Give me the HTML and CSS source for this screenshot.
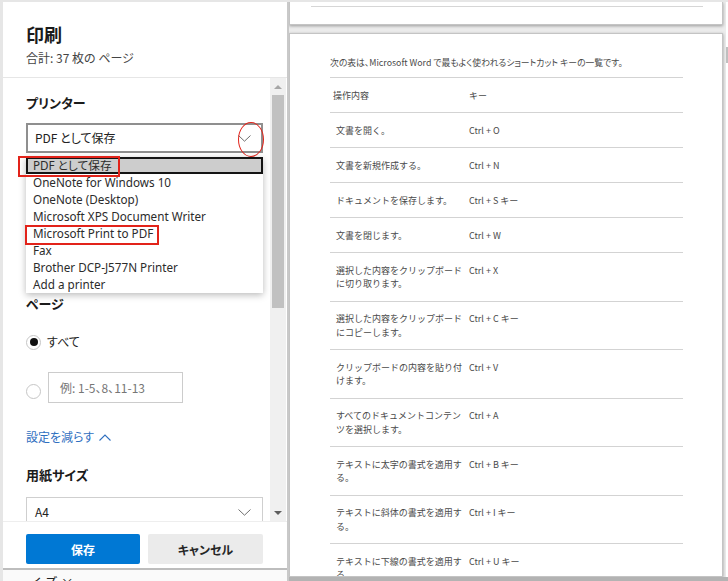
FILE: index.html
```html
<!DOCTYPE html>
<html lang="ja">
<head>
<meta charset="utf-8">
<title>印刷</title>
<link rel="stylesheet" href="styles.css">
</head>
<body>
<div class="app">
  <aside class="side">
    <div class="dialog">
      <header class="dlg-head">
        <h1 class="title">印刷</h1>
        <p class="subtitle">合計: 37 枚の ページ</p>
      </header>
      <div class="dlg-body">
        <div class="scroll-content">
          <section class="group printer">
            <h2 class="label">プリンター</h2>
            <div class="select-wrap">
              <div class="select select-open">
                <span class="select-text">PDF として保存</span>
                <svg class="chev" width="13" height="7" viewBox="0 0 13 7"><path d="M0.5 0.5 L6.5 6.2 L12.5 0.5" fill="none" stroke="#6e6e6e" stroke-width="1"/></svg>
                <span class="mark-ellipse"></span>
              </div>
              <ul class="dropdown">
                <li class="opt opt-active">PDF として保存<span class="mark-rect mark-a"></span></li>
                <li class="opt">OneNote for Windows 10</li>
                <li class="opt">OneNote (Desktop)</li>
                <li class="opt">Microsoft XPS Document Writer</li>
                <li class="opt">Microsoft Print to PDF<span class="mark-rect mark-b"></span></li>
                <li class="opt">Fax</li>
                <li class="opt">Brother DCP-J577N Printer</li>
                <li class="opt">Add a printer</li>
              </ul>
            </div>
          </section>
          <section class="group pages-grp">
            <h2 class="label">ページ</h2>
            <div class="radio-row">
              <span class="radio checked"></span>
              <span class="radio-label">すべて</span>
            </div>
            <div class="radio-row range">
              <span class="radio"></span>
              <span class="text-input">例: 1-5、8、11-13</span>
            </div>
          </section>
          <div class="more-link"><span>設定を減らす</span><svg class="chev-up" width="12" height="7" viewBox="0 0 12 7"><path d="M0.5 6.5 L6 1 L11.5 6.5" fill="none" stroke="#2f6fbf" stroke-width="1.1"/></svg></div>
          <section class="group paper">
            <h2 class="label">用紙サイズ</h2>
            <div class="select select-light">
              <span class="select-text">A4</span>
              <svg class="chev" width="13" height="7" viewBox="0 0 13 7"><path d="M0.5 0.5 L6.5 6.2 L12.5 0.5" fill="none" stroke="#6e6e6e" stroke-width="1"/></svg>
            </div>
          </section>
        </div>
        <div class="scrollbar">
          <div class="sb-btn"><span class="tri tri-up"></span></div>
          <div class="sb-track"><div class="sb-thumb"></div></div>
          <div class="sb-btn"><span class="tri tri-down"></span></div>
        </div>
      </div>
      <footer class="dlg-foot">
        <button class="btn btn-primary">保存</button>
        <button class="btn btn-secondary">キャンセル</button>
      </footer>
    </div>
    <div class="behind">ー イ ズ ×</div>
  </aside>
  <main class="preview">
    <div class="pages">
      <div class="page page-prev"><div class="rule"></div></div>
      <div class="page page-cur">
        <p class="intro">次の表は、Microsoft Word で最もよく使われるショートカット キーの一覧です。</p>
        <table class="keys">
          <tr class="head"><td>操作内容</td><td>キー</td></tr>
          <tr><td>文書を開く。</td><td>Ctrl + O</td></tr>
          <tr><td>文書を新規作成する。</td><td>Ctrl + N</td></tr>
          <tr><td>ドキュメントを保存します。</td><td>Ctrl + S キー</td></tr>
          <tr><td>文書を閉じます。</td><td>Ctrl + W</td></tr>
          <tr><td>選択した内容をクリップボード<br>に切り取ります。</td><td>Ctrl + X</td></tr>
          <tr><td>選択した内容をクリップボード<br>にコピーします。</td><td>Ctrl + C キー</td></tr>
          <tr><td>クリップボードの内容を貼り付<br>けます。</td><td>Ctrl + V</td></tr>
          <tr><td>すべてのドキュメントコンテン<br>ツを選択します。</td><td>Ctrl + A</td></tr>
          <tr><td>テキストに太字の書式を適用す<br>る。</td><td>Ctrl + B キー</td></tr>
          <tr><td>テキストに斜体の書式を適用す<br>る。</td><td>Ctrl + I キー</td></tr>
          <tr><td>テキストに下線の書式を適用す<br>る。</td><td>Ctrl + U キー</td></tr>
        </table>
      </div>
    </div>
    <div class="vscroll"><div class="vthumb"></div></div>
  </main>
</div>
</body>
</html>
```
FILE: styles.css
```css
* { box-sizing: border-box; margin: 0; padding: 0; }
html, body { width: 728px; height: 581px; overflow: hidden; }
body {
  background: #e4e4e4;
  font-family: "Noto Sans CJK JP", "Noto Sans", sans-serif;
  color: #1e1e1e;
}
.app {
  display: flex;
  align-items: flex-start;
  height: 581px;
  padding: 2px 0 0 3px;
  background: #e6e6e6;
}

/* ---------- left: print dialog ---------- */
.side {
  width: 286px;
  height: 579px;
  flex: none;
  display: flex;
  flex-direction: column;
  border-right: 2px solid #c9c9c9;
  overflow: hidden;
}
.dialog {
  height: 568px;
  flex: none;
  background: #fff;
  display: flex;
  flex-direction: column;
  border-bottom: 2px solid #bdbdbd;
  font-feature-settings: "palt";
}
.dlg-head {
  height: 76px;
  flex: none;
  padding: 20px 23px 0;
  border-bottom: 1px solid #e6e6e6;
}
.title {
  height: 24px;
  font-size: 18px;
  line-height: 24px;
  font-weight: 600;
  color: #1a1a1a;
}
.subtitle {
  height: 16px;
  margin-top: 4px;
  font-size: 12px;
  line-height: 16px;
  color: #444;
}
.dlg-body {
  height: 443px;
  flex: none;
  display: flex;
}
.scroll-content {
  flex: 1;
  overflow: hidden;
  padding: 16px 7px 0 23px;
}
.label {
  height: 18px;
  font-size: 13px;
  line-height: 18px;
  font-weight: 600;
  color: #1b1b1b;
}
.select-wrap {
  position: relative;
  margin-top: 11px;
}
.select {
  position: relative;
  height: 30px;
  display: flex;
  align-items: center;
  justify-content: space-between;
  padding: 0 10px 0 7px;
  border: 2px solid #8f8f8f;
  background: #fff;
}
.select-text {
  font-size: 12px;
  line-height: 16px;
  color: #222;
}
.select-light {
  margin-top: 13px;
  border: 1px solid #cfcfcf;
  padding-left: 8px;
  padding-right: 11px;
}
.chev { display: block; }
.mark-ellipse {
  position: absolute;
  left: 210px;
  top: -3px;
  width: 26px;
  height: 35px;
  border: 1.5px solid #e2231a;
  border-radius: 50%;
}
.dropdown {
  position: absolute;
  top: 34px;
  left: 0;
  width: 237px;
  list-style: none;
  background: #fff;
  box-shadow: 0 2px 7px rgba(0, 0, 0, 0.28);
  z-index: 5;
}
.opt {
  position: relative;
  height: 17px;
  line-height: 17px;
  padding-left: 7px;
  font-family: "Noto Sans", "Noto Sans CJK JP", sans-serif;
  font-size: 11.7px;
  color: #2b2b2b;
  white-space: nowrap;
}
.opt-active {
  background: #cdcdcd;
  box-shadow: inset 0 0 0 2px #141414;
}
.mark-rect {
  position: absolute;
  border: 2px solid #e2231a;
}
.mark-a { left: -8px; top: -1px; width: 102px; height: 21px; }
.mark-b { left: -1px; top: 0; width: 134px; height: 20px; }

.pages-grp { margin-top: 142px; }
.radio-row {
  display: flex;
  align-items: center;
  height: 24px;
  margin-top: 17px;
}
.radio-row.range {
  height: 31px;
  margin-top: 18px;
}
.radio {
  width: 15px;
  height: 15px;
  flex: none;
  border-radius: 50%;
  border: 1.5px solid #c6c6c6;
  background: #fff;
  display: flex;
  align-items: center;
  justify-content: center;
}
.range .radio { margin-top: 8px; }
.radio.checked::after {
  content: "";
  width: 8px;
  height: 8px;
  border-radius: 50%;
  background: #111;
}
.radio-label {
  margin-left: 6px;
  font-size: 12px;
  line-height: 16px;
  color: #222;
}
.text-input {
  margin-left: 7px;
  width: 135px;
  height: 31px;
  border: 1px solid #cccccc;
  padding-left: 11px;
  font-size: 12px;
  line-height: 29px;
  color: #767676;
}
.more-link {
  height: 18px;
  margin-top: 25px;
  display: flex;
  align-items: center;
  gap: 5px;
  font-size: 12px;
  line-height: 18px;
  color: #2f6fbf;
}
.paper { margin-top: 20px; }

.scrollbar {
  width: 16px;
  flex: none;
  margin-right: 1px;
  background: #f0f0f0;
  display: flex;
  flex-direction: column;
}
.sb-btn {
  height: 17px;
  flex: none;
  display: flex;
  align-items: center;
  justify-content: center;
}
.tri {
  width: 0;
  height: 0;
  border-left: 4px solid transparent;
  border-right: 4px solid transparent;
}
.tri-up { border-bottom: 4px solid #a6a6a6; }
.tri-down { border-top: 4px solid #5e5e5e; }
.sb-track { flex: 1; padding: 0 2px; }
.sb-thumb {
  height: 213px;
  background: #c1c1c1;
}

.dlg-foot {
  height: 47px;
  flex: none;
  display: flex;
  gap: 8px;
  padding: 12px 0 0 23px;
  border-top: 1px solid #eeeeee;
}
.btn {
  height: 30px;
  border: none;
  border-radius: 2px;
  font-family: inherit;
  font-size: 12px;
  font-weight: 700;
  font-feature-settings: "palt";
}
.btn-primary {
  width: 114px;
  background: #0078d4;
  color: #fff;
}
.btn-secondary {
  width: 115px;
  background: #ebebeb;
  color: #262626;
}
.behind {
  flex: 1;
  background: #fafafa;
  padding: 4px 0 0 10px;
  font-size: 13px;
  line-height: 16px;
  color: #222;
  white-space: nowrap;
  overflow: hidden;
}

/* ---------- right: preview ---------- */
.preview {
  flex: 1;
  height: 579px;
  display: flex;
  align-items: flex-start;
  background: #ececec;
  border-bottom: 4px solid #b3b3b3;
  overflow: hidden;
}
.pages {
  flex: 1;
}
.page {
  background: #fff;
  border: 1px solid #c4c4c4;
  box-shadow: 0 1px 3px rgba(0, 0, 0, 0.35);
}
.page-prev {
  height: 23px;
  border-top: none;
  padding: 4px 19px 0 21px;
}
.rule {
  height: 1px;
  background: #d6d6d6;
}
.page-cur {
  margin-top: 8px;
  height: 544px;
  padding: 22px 39px 0 40px;
  overflow: hidden;
  color: #4a4a4a;
}
.intro {
  height: 13px;
  font-size: 8.8px;
  line-height: 13px;
  font-feature-settings: "palt";
  white-space: nowrap;
  margin-bottom: 8px;
}
.keys {
  width: 100%;
  border-collapse: collapse;
  font-size: 9px;
  line-height: 13.5px;
}
.keys td {
  padding: 10.5px 0 10px;
  border-top: 1px solid #d3d3d3;
  vertical-align: top;
}
.keys td:first-child {
  width: 139px;
  padding-left: 6px;
}
.keys .head td:first-child { padding-left: 3px; }
.vscroll {
  width: 2px;
  height: 575px;
  flex: none;
  margin-left: 3px;
  background: #fff;
  padding-top: 45px;
}
.vthumb {
  width: 2px;
  height: 16px;
  background: #bfbfbf;
}
```
